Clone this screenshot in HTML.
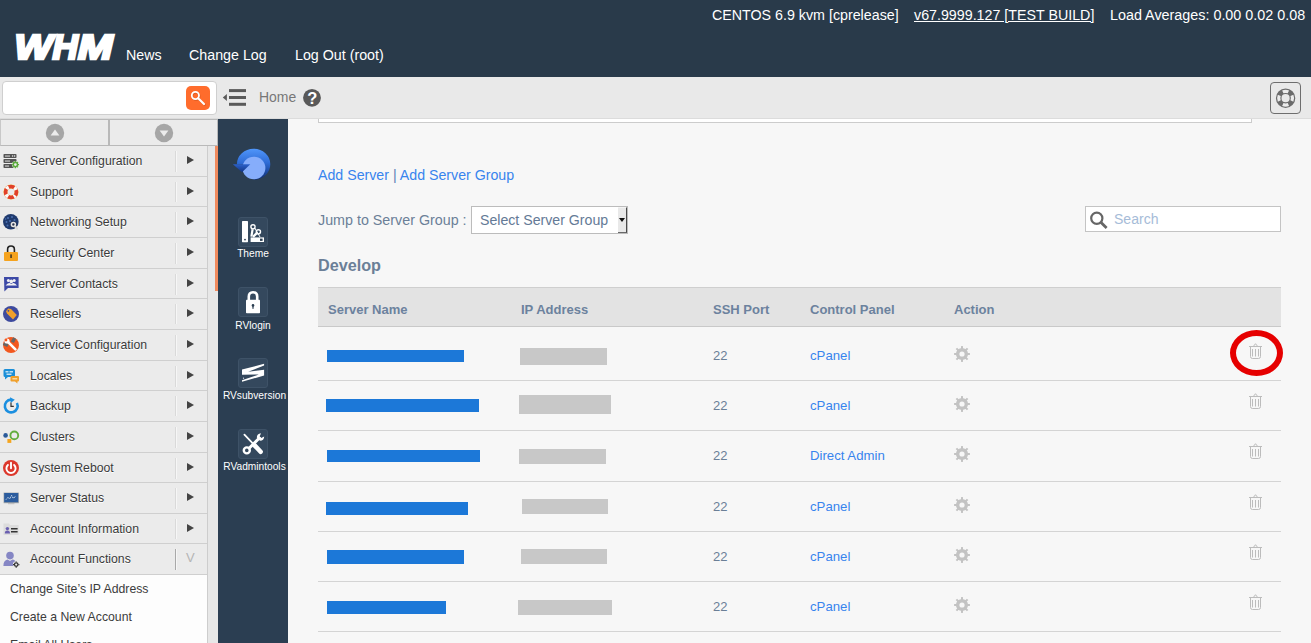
<!DOCTYPE html>
<html lang="en">
<head>
<meta charset="utf-8">
<title>WHM - Server List</title>
<style>
*{box-sizing:border-box;margin:0;padding:0}
html,body{width:1311px;height:643px;overflow:hidden;background:#f7f7f7;font-family:"Liberation Sans",Arial,sans-serif;}
.abs{position:absolute}
#hdr{position:absolute;left:0;top:0;width:1311px;height:77px;background:#293a4a;color:#fff}
#hdr .t{position:absolute;white-space:nowrap;font-size:14.25px;line-height:17px;color:#fff}
#bar{position:absolute;left:0;top:77px;width:1311px;height:42px;background:#e9e9e9;border-bottom:1px solid #dcdcdc}
#side{position:absolute;left:0;top:119px;width:218px;height:524px;background:#ededed}
#dark{position:absolute;left:218px;top:119px;width:70px;height:524px;background:#2b3e52}
#main{position:absolute;left:288px;top:119px;width:1023px;height:524px;background:#f7f7f7;overflow:hidden}
.mi{position:absolute;left:0;width:207px;height:31px;border-bottom:1px solid #cfcfcf;background:#ebebeb;font-size:12.25px;color:#3a3a3a}
.mi span{position:absolute;left:30px;top:7px;line-height:16px;white-space:nowrap;text-shadow:0 1px 0 #fff}
.mi i{position:absolute;left:175px;top:5px;width:1px;height:20px;background:#d9d9d9;border-right:1px solid #f6f6f6;width:2px}
.mi b{position:absolute;left:187px;top:10px;width:0;height:0;border-left:7px solid #444;border-top:4px solid transparent;border-bottom:4px solid transparent}
.mi em{position:absolute;left:186px;top:6px;font-style:normal;font-size:13px;color:#b5b5b5;line-height:16px}
.ic{position:absolute;left:2px;top:6px;width:18px;height:18px;text-decoration:none}
.sub{position:absolute;left:10px;font-size:12.25px;color:#3c3c3c;white-space:nowrap;line-height:16px}
.dl{position:absolute;left:-5px;width:80px;text-align:center;color:#fff;font-size:10.2px;line-height:12px;white-space:nowrap}
.dbox{left:20px;width:30px;height:30px;background:#34485d;border:1px solid #3e5267;border-radius:3px}
.th{position:absolute;top:183px;font-weight:bold;font-size:13px;color:#6c829e;line-height:16px;white-space:nowrap}
.row{position:absolute;left:30px;width:963px;height:1px;background:#d4d4d4}
.c{position:absolute;font-size:13px;line-height:16px;white-space:nowrap}
.blue{color:#3884ee}
.sl{color:#6b7f97}
.bb{position:absolute;background:#1c78d8;height:11px}
.gb{position:absolute;background:#c8c8c8;height:15px}
</style>
</head>
<body>
<div id="hdr">
  <div class="t" style="left:712px;top:7px">CENTOS 6.9 kvm [cprelease]</div>
  <div class="t" style="left:914px;top:7px;text-decoration:underline">v67.9999.127 [TEST BUILD]</div>
  <div class="t" style="left:1110px;top:7px;font-size:14.35px">Load Averages: 0.00 0.02 0.08</div>
  <svg class="abs" style="left:8px;top:26px" width="116" height="42" viewBox="0 0 116 42"><g font-family="Liberation Sans,Arial,sans-serif" font-weight="bold" font-style="italic" font-size="35.4" fill="#fff" stroke="#fff" stroke-width="2.6" stroke-linejoin="miter"><text x="6.6" y="33.1" textLength="38" lengthAdjust="spacingAndGlyphs">W</text><text x="44.6" y="33.1" textLength="25.4" lengthAdjust="spacingAndGlyphs">H</text><text x="70" y="33.1" textLength="34.6" lengthAdjust="spacingAndGlyphs">M</text></g></svg>
  <div class="t" style="left:126px;top:47px">News</div>
  <div class="t" style="left:189px;top:47px">Change Log</div>
  <div class="t" style="left:295px;top:47px">Log Out (root)</div>
</div>
<div id="bar">
  <div class="abs" style="left:2px;top:4px;width:215px;height:34px;background:#fff;border:1px solid #cfcfcf;border-radius:4px"></div>
  <div class="abs" style="left:186px;top:9px;width:24px;height:24px;background:#ff6c2c;border-radius:5px"></div>
  <svg class="abs" style="left:186px;top:9px" width="24" height="24" viewBox="0 0 24 24"><g fill="none" stroke="#b84a1a" stroke-opacity=".55" transform="translate(.6 .8)"><circle cx="9.4" cy="9.5" r="3.6" stroke-width="1.8"/><path d="M12.2 12.3 L18 18" stroke-width="2.2" stroke-linecap="round"/></g><g fill="none" stroke="#fff"><circle cx="9.4" cy="9.5" r="3.6" stroke-width="1.8"/><path d="M12.2 12.3 L18 18" stroke-width="2.2" stroke-linecap="round"/></g></svg>
  <svg class="abs" style="left:220px;top:10px" width="28" height="22" viewBox="0 0 28 22"><g fill="#5a5a5a"><rect x="9" y="2.1" width="17" height="3"/><rect x="9" y="9" width="17" height="3"/><rect x="9" y="15.8" width="17" height="3"/><path d="M2.8 10.5 L6.9 7 V14Z"/></g></svg>
  <div class="abs" style="left:259px;top:10px;font-size:15.5px;line-height:19px;color:#777;transform:scaleX(.9);transform-origin:0 0">Home</div>
  <svg class="abs" style="left:302px;top:11px" width="20" height="20" viewBox="0 0 20 20"><circle cx="10" cy="9.8" r="8.9" fill="#595959"/><text x="10.2" y="15.6" text-anchor="middle" font-family="Liberation Sans,Arial,sans-serif" font-weight="bold" font-size="16.5" fill="#fff">?</text></svg>
  <div class="abs" style="left:1270px;top:5px;width:31px;height:32px;border:1px solid #6e6e6e;border-radius:4px;background:#e9e9e9"></div>
  <svg class="abs" style="left:1273px;top:9px" width="25" height="25" viewBox="0 0 25 25"><circle cx="12.6" cy="12.2" r="6.9" fill="none" stroke="#6b6b6b" stroke-width="5.6"/><path d="M9.79 5.90 A6.90 6.90 0 0 1 15.41 5.90 M18.90 9.39 A6.90 6.90 0 0 1 18.90 15.01 M15.41 18.50 A6.90 6.90 0 0 1 9.79 18.50 M6.30 15.01 A6.90 6.90 0 0 1 6.30 9.39" fill="none" stroke="#ececec" stroke-width="3.2"/></svg>
</div>
<div id="side">
<div class="abs" style="left:0;top:0;width:109px;height:27px;border:1px solid #b9b9b9;border-left-color:#c8c8c8;background:#ebebeb"></div>
<div class="abs" style="left:109px;top:0;width:109px;height:27px;border:1px solid #b9b9b9;background:#ebebeb"></div>
<svg class="abs" style="left:45px;top:4px" width="20" height="20" viewBox="0 0 20 20"><circle cx="10" cy="10" r="9.2" fill="#a6a6a6"/><path d="M5.6 12.6 L10 6.6 L14.4 12.6Z" fill="#ececec"/></svg>
<svg class="abs" style="left:154px;top:4px" width="20" height="20" viewBox="0 0 20 20"><circle cx="10" cy="10" r="9.2" fill="#a6a6a6"/><path d="M5.6 7.6 L10 13.6 L14.4 7.6Z" fill="#ececec"/></svg>
<div class="mi" style="top:27px;height:31px"><svg class="ic" width="18" height="18" viewBox="0 0 18 18"><g fill="#555"><rect x="1.5" y="2" width="13" height="4" rx=".8"/><rect x="1.5" y="7" width="13" height="4" rx=".8"/><rect x="1.5" y="12" width="10" height="4" rx=".8"/></g><g fill="#eee"><rect x="3" y="3.6" width="5" height=".9"/><rect x="3" y="8.6" width="5" height=".9"/><rect x="3" y="13.6" width="4" height=".9"/><circle cx="12.6" cy="4" r=".7"/><circle cx="10.6" cy="4" r=".7"/></g><g transform="translate(-.6 -1) scale(.96)" transform-origin="14 13.6"><circle cx="14" cy="13.6" r="3.6" fill="#ebebeb"/><circle cx="14" cy="13.6" r="2.2" fill="none" stroke="#5cab3c" stroke-width="1.5"/><g stroke="#5cab3c" stroke-width="1.3"><path d="M14 9.8V11M14 16.2V17.4M10.2 13.6H11.4M16.6 13.6H17.8M11.3 10.9l.9.9M15.8 15.4l.9.9M11.3 16.3l.9-.9M15.8 11.8l.9-.9"/></g></g></svg><span style="top:7px">Server Configuration</span><i style="top:5px;height:21px"></i><b style="top:10px"></b></div>
<div class="mi" style="top:58px;height:30px"><svg class="ic" width="18" height="18" viewBox="0 0 18 18"><circle cx="9" cy="9" r="7.6" fill="#f6d25a"/><circle cx="9" cy="9" r="5.4" fill="none" stroke="#e1402a" stroke-width="3.8"/><circle cx="9" cy="9" r="5.4" fill="none" stroke="#fafafa" stroke-width="3.8" stroke-dasharray="3 5.48" stroke-dashoffset="1.5" transform="rotate(45 9 9)"/><circle cx="9" cy="9" r="3.3" fill="#ebebeb"/></svg><span style="top:7px">Support</span><i style="top:5px;height:20px"></i><b style="top:10px"></b></div>
<div class="mi" style="top:88px;height:31px"><svg class="ic" width="18" height="18" viewBox="0 0 18 18"><circle cx="8.8" cy="8.8" r="7.8" fill="#1f3a6e"/><g fill="#4a6fb0"><circle cx="6" cy="5" r="1.1"/><circle cx="10" cy="4" r="1"/><circle cx="12.5" cy="7" r="1"/><circle cx="4.5" cy="9" r="1"/><circle cx="8" cy="8" r="1"/><circle cx="5.5" cy="12.5" r="1"/><circle cx="3.6" cy="6" r=".8"/></g><circle cx="11.6" cy="11.8" r="3.4" fill="#2a3550"/><circle cx="11.4" cy="11.4" r="2" fill="none" stroke="#e6e6e6" stroke-width="1.5"/><path d="M12.8 13 L15 15.6" stroke="#d8d8d8" stroke-width="2.2" stroke-linecap="round"/></svg><span style="top:7px">Networking Setup</span><i style="top:5px;height:21px"></i><b style="top:10px"></b></div>
<div class="mi" style="top:119px;height:31px"><svg class="ic" width="18" height="18" viewBox="0 0 18 18"><path d="M5.6 8.5 V5.4 Q5.6 2 9 2 Q12.4 2 12.4 5.4 V8.5" fill="none" stroke="#222" stroke-width="1.6"/><rect x="2" y="8" width="14" height="9" rx="1" fill="#f5a31f"/><rect x="8.4" y="10.4" width="1.3" height="3.6" fill="#222"/></svg><span style="top:7px">Security Center</span><i style="top:5px;height:21px"></i><b style="top:10px"></b></div>
<div class="mi" style="top:150px;height:30px"><svg class="ic" width="18" height="18" viewBox="0 0 18 18"><path d="M2 2 H16.6 V13 H6 L2.4 16.6 Z" fill="#3c49a6"/><g fill="#f2f2f2"><circle cx="6.4" cy="5.6" r="1.5"/><circle cx="12.2" cy="5.6" r="1.5"/><circle cx="9.3" cy="6.4" r="1.8"/><path d="M3.6 10.6 Q6.4 6.6 9.3 9 Q12.2 6.6 15 10.6 Z"/></g></svg><span style="top:7px">Server Contacts</span><i style="top:5px;height:21px"></i><b style="top:10px"></b></div>
<div class="mi" style="top:180px;height:31px"><svg class="ic" width="18" height="18" viewBox="0 0 18 18"><circle cx="9" cy="9" r="8" fill="#3d4a9e"/><path d="M4 6.2 L6.2 3.6 L9 4 L14.8 10 L11 14.4 L5 8.6 Z" fill="#f0a02c"/><circle cx="6.4" cy="5.8" r=".9" fill="#3d4a9e"/></svg><span style="top:7px">Resellers</span><i style="top:5px;height:20px"></i><b style="top:10px"></b></div>
<div class="mi" style="top:211px;height:31px"><svg class="ic" width="18" height="18" viewBox="0 0 18 18"><circle cx="9" cy="9" r="8" fill="#f2581f"/><path d="M1.6 7.4 L6 9.6 M12.6 2 L10.4 6.2" stroke="#666" stroke-width="3.4"/><path d="M5.4 5.4 L13.4 13.4" stroke="#fff" stroke-width="2.6" stroke-linecap="round"/><circle cx="5" cy="5" r="2.6" fill="#fff"/><circle cx="4" cy="4" r="1.4" fill="#f2581f"/></svg><span style="top:7px">Service Configuration</span><i style="top:5px;height:21px"></i><b style="top:10px"></b></div>
<div class="mi" style="top:242px;height:30px"><svg class="ic" width="18" height="18" viewBox="0 0 18 18"><path d="M1.5 3.5 Q1.5 2 3 2 H11.5 Q13 2 13 3.5 V8.5 Q13 10 11.5 10 H6 L3 12.6 V10 Q1.5 10 1.5 8.500 Z" fill="#1b8fd8"/><path d="M8.5 10 Q8.500 9 9.5 9 H16 Q17 9 17 10 V13.500 Q17 14.5 16 14.500 H15.400 V16.400 L13 14.500 H9.500 Q8.500 14.500 8.500 13.500Z" fill="#f0a02c"/><g fill="#eaf4fb"><rect x="3.5" y="4.200" width="3" height="1.200"/><rect x="7.500" y="4.200" width="3.500" height="1.200"/><rect x="4.500" y="6.600" width="5" height="1.200"/></g><rect x="10.400" y="11.200" width="4.800" height="1.200" fill="#fbe6c0"/></svg><span style="top:7px">Locales</span><i style="top:5px;height:21px"></i><b style="top:10px"></b></div>
<div class="mi" style="top:272px;height:31px"><svg class="ic" width="18" height="18" viewBox="0 0 18 18"><path d="M14.9 6 A6.400 6.400 0 1 1 9 2.600" fill="none" stroke="#1b8fe0" stroke-width="2.600"/><path d="M8 .2 L12.800 2.800 L8.800 6 Z" fill="#1b8fe0"/><path d="M9 5.500 V9.400 H11.800" fill="none" stroke="#333" stroke-width="1.200"/></svg><span style="top:7px">Backup</span><i style="top:5px;height:20px"></i><b style="top:10px"></b></div>
<div class="mi" style="top:303px;height:31px"><svg class="ic" width="18" height="18" viewBox="0 0 18 18"><circle cx="12.300" cy="7.400" r="3.900" fill="none" stroke="#63ad3e" stroke-width="1.900"/><circle cx="3.600" cy="7.400" r="2.300" fill="#2a5a9a"/><rect x="5.400" y="11" width="3.900" height="3.900" fill="#f5a51f"/></svg><span style="top:7px">Clusters</span><i style="top:5px;height:21px"></i><b style="top:10px"></b></div>
<div class="mi" style="top:334px;height:30px"><svg class="ic" width="18" height="18" viewBox="0 0 18 18"><circle cx="9" cy="9" r="8" fill="#dc382c"/><path d="M5.900 6 A4.600 4.600 0 1 0 12.100 6" fill="none" stroke="#fff" stroke-width="1.900" stroke-linecap="round"/><path d="M9 3.600 V9.200" stroke="#fff" stroke-width="1.900" stroke-linecap="round"/></svg><span style="top:7px">System Reboot</span><i style="top:5px;height:21px"></i><b style="top:10px"></b></div>
<div class="mi" style="top:364px;height:31px"><svg class="ic" width="18" height="18" viewBox="0 0 18 18"><rect x="1.600" y="3.600" width="15.200" height="10.600" fill="#9aa0a6"/><rect x="2.200" y="4" width="14" height="9.200" fill="#2b5c9e"/><path d="M4 10.600 L6 8.400 L7.600 10 L9.600 6.400 L11.400 9.400 L13.600 7" fill="none" stroke="#dfe9f5" stroke-width="1" stroke-dasharray="1.400 .8"/><rect x="6" y="14.200" width="6.400" height="1" fill="#b8b8b8"/></svg><span style="top:7px">Server Status</span><i style="top:5px;height:21px"></i><b style="top:10px"></b></div>
<div class="mi" style="top:395px;height:30px"><svg class="ic" width="18" height="18" viewBox="0 0 18 18"><path d="M1.500 3.500 H7 L8 5 H16.600 V15 H1.500 Z" fill="#dcdcdc"/><circle cx="5.400" cy="8.600" r="1.700" fill="#6a5fb0"/><path d="M2.800 13.400 Q2.800 10.600 5.400 10.600 Q8 10.600 8 13.400Z" fill="#6a5fb0"/><rect x="9" y="8" width="6.600" height="1.500" fill="#333"/><rect x="9" y="11" width="6.600" height="1.500" fill="#333"/></svg><span style="top:7px">Account Information</span><i style="top:5px;height:20px"></i><b style="top:10px"></b></div>
<div class="mi" style="top:425px;height:31px"><svg class="ic" width="18" height="18" viewBox="0 0 18 18"><circle cx="8" cy="5.600" r="3.800" fill="#8586c4"/><path d="M1.400 16 Q1.400 10.200 5.600 9.600 L8 11 L10.400 9.600 Q13.400 10 14 13 V16 Z" fill="#8586c4"/><circle cx="14.200" cy="14.600" r="3.300" fill="#ebebeb"/><circle cx="14.200" cy="14.600" r="1.800" fill="none" stroke="#333" stroke-width="1.300"/><path d="M14.200 11.400V12.400M14.200 16.800V17.800M11 14.600H12M16.400 14.600H17.400" stroke="#333" stroke-width="1.200"/></svg><span style="top:7px">Account Functions</span><i style="background:#a9a9a9;top:5px;height:21px"></i><em>V</em></div>
<div class="abs" style="left:0;top:456px;width:207px;height:68px;background:#fdfdfd"></div>
<div class="sub" style="top:462px">Change Site’s IP Address</div>
<div class="sub" style="top:490px">Create a New Account</div>
<div class="sub" style="top:518px">Email All Users</div>
<div class="abs" style="left:207px;top:27px;width:11px;height:497px;background:#e7e7e7;border-left:1px solid #cdcdcd"></div>
<div class="abs" style="left:215px;top:27px;width:3px;height:145px;background:#f08a5d"></div>
</div>
<div id="dark">
<svg class="abs" style="left:14px;top:26px" width="42" height="40" viewBox="0 0 42 40">
<defs><linearGradient id="g1" x1="0" y1="0" x2="0" y2="1"><stop offset="0" stop-color="#5096fa"/><stop offset=".45" stop-color="#2f6cd6"/><stop offset="1" stop-color="#0e2c72"/></linearGradient><linearGradient id="g2" x1="0" y1="0" x2="0" y2="1"><stop offset="0" stop-color="#2c62cc"/><stop offset="1" stop-color="#123484"/></linearGradient></defs>
<path d="M21.6 19.2 L4.900 19.200 A16.700 15.500 0 1 1 21.600 34.700 Z" fill="url(#g1)"/>
<ellipse cx="21.900" cy="23" rx="11.500" ry="11.300" fill="#86adfb"/>
<path d="M.9 19.200 H18.300 L10 27.200 Z" fill="url(#g2)"/>
</svg>
<div class="abs dbox" style="top:98px"></div>
<div class="dl" style="top:129px;left:-5px">Theme</div>
<div class="abs dbox" style="top:168px"></div>
<div class="dl" style="top:201px;left:-5px">RVlogin</div>
<div class="abs dbox" style="top:239px"></div>
<div class="dl" style="top:271px;left:-3.5px">RVsubversion</div>
<div class="abs dbox" style="top:310px"></div>
<div class="dl" style="top:342px;left:-3.5px">RVadmintools</div>
<svg class="abs" style="left:20px;top:98px" width="30" height="30" viewBox="0 0 30 30"><rect x="4" y="4" width="6" height="21.2" rx=".6" fill="#fff"/><circle cx="7" cy="22.6" r=".9" fill="#2b3e52"/><g fill="none" stroke="#fff"><path d="M12.6 22.7 H26" stroke-width="4.6"/><path d="M13.400 19.600 L14.600 12.200" stroke-width="2.200"/><path d="M15 19.800 L18.800 16.200" stroke-width="2.400"/><circle cx="15" cy="9.800" r="2.100" stroke-width="1.400"/><circle cx="20.400" cy="14.800" r="2.100" stroke-width="1.400"/><path d="M16.800 11 L22 20" stroke-width="1"/></g><rect x="22" y="21.600" width="2.600" height="2.300" fill="#2b3e52"/></svg>
<svg class="abs" style="left:20px;top:168px" width="30" height="30" viewBox="0 0 30 30"><path d="M10.800 13.500 V9.600 Q10.800 5.200 15 5.200 Q19.200 5.200 19.200 9.600 V13.500" fill="none" stroke="#fff" stroke-width="2.600"/><rect x="8" y="12.800" width="14" height="13.400" rx=".8" fill="#fff"/><circle cx="15" cy="18.400" r="1.300" fill="#2b3e52"/><rect x="14.400" y="18.600" width="1.200" height="3.200" fill="#2b3e52"/></svg>
<svg class="abs" style="left:20px;top:239px" width="30" height="30" viewBox="0 0 30 30"><path d="M26.1 5.800 L4 11.600 V16.700 L20.800 16.500 L4 22.200 V23.800 L26.100 17.600 V11.700 L10.200 13.700 L26.100 7.500 Z" fill="#fff"/><circle cx="5.500" cy="20.200" r=".6" fill="#e8edf2"/></svg>
<svg class="abs" style="left:20px;top:310px" width="30" height="30" viewBox="0 0 30 30"><g fill="none" stroke="#fff" stroke-linecap="round"><path d="M6.400 5.600 L15 14.600" stroke-width="1.800"/><path d="M16.600 16.400 L22.600 22.800" stroke-width="4.600"/><path d="M11.400 19 L21.400 9" stroke-width="3"/><circle cx="8.800" cy="21.400" r="3" stroke-width="2.400"/></g><path d="M18.800 8.400 Q19 4.600 23 4.200 L21.600 7.400 L23.200 9 L26.200 7.400 Q26 11.600 22 11.800 Z" fill="#fff"/></svg>
</div>

<div id="main">
<div class="abs" style="left:30px;top:-10px;width:934px;height:14px;background:#fff;border:1px solid #ccc"></div>
<div class="c" style="left:30px;top:48px;font-size:14.2px;line-height:17px"><span class="blue">Add Server</span> <span style="color:#5f83b8">|</span> <span class="blue">Add Server Group</span></div>
<div class="c" style="left:30px;top:93px;font-size:14.3px;line-height:17px;color:#6b7f97">Jump to Server Group :</div>
<div class="abs" style="left:183px;top:87px;width:157px;height:28px;background:#fff;border:1px solid #bcbcbc"></div>
<div class="abs" style="left:330px;top:88px;width:9px;height:26px;background:#e9e9e9;border-right:1px solid #4a4a4a;border-bottom:1px solid #6a6a6a;border-top:1px solid #f4f4f4"></div>
<div class="c" style="left:192px;top:93px;font-size:14.15px;line-height:17px;color:#647a96">Select Server Group</div>
<div class="abs" style="left:331px;top:99px;width:0;height:0;border-top:4px solid #111;border-left:3px solid transparent;border-right:3px solid transparent"></div>
<div class="abs" style="left:797px;top:87px;width:196px;height:26px;background:#fff;border:1px solid #c4c4c4"></div>
<div class="c" style="left:826px;top:92px;font-size:14.05px;line-height:17px;color:#a6bcd8">Search</div>
<svg class="abs" style="left:801px;top:91px" width="20" height="22" viewBox="0 0 20 22"><circle cx="7.8" cy="8.3" r="5.6" fill="none" stroke="#666" stroke-width="2.2"/><path d="M11.8 12.3 L17.6 18.1" stroke="#666" stroke-width="2.8" stroke-linecap="butt"/></svg>
<div class="c" style="left:30px;top:137px;font-size:16.2px;line-height:19px;font-weight:bold;color:#6b7f97">Develop</div>
<div class="abs" style="left:30px;top:168px;width:963px;height:40px;background:#e3e3e3;border-top:1px solid #cfcfcf;border-bottom:1px solid #c9c9c9"></div>
<div class="th" style="left:40px">Server Name</div>
<div class="th" style="left:233px">IP Address</div>
<div class="th" style="left:425px">SSH Port</div>
<div class="th" style="left:522px">Control Panel</div>
<div class="th" style="left:666px">Action</div>
<div class="row" style="top:261px"></div>
<div class="row" style="top:311px"></div>
<div class="row" style="top:362px"></div>
<div class="row" style="top:412px"></div>
<div class="row" style="top:462px"></div>
<div class="row" style="top:512px"></div>
<div class="bb" style="left:39px;top:231px;width:137px;height:12px"></div>
<div class="gb" style="left:232px;top:229px;width:87px;height:17px"></div>
<div class="c sl" style="left:425px;top:229px">22</div>
<div class="c blue" style="left:522px;top:229px;font-size:13.2px">cPanel</div>
<svg class="abs gear" style="left:665px;top:226px" width="18" height="18" viewBox="0 0 18 18"><g fill="#c3c3c3"><circle cx="9" cy="9" r="6.1"/><rect x="8" y="1.1" width="2" height="4" transform="rotate(0 9 9)"/><rect x="8" y="1.1" width="2" height="4" transform="rotate(45 9 9)"/><rect x="8" y="1.1" width="2" height="4" transform="rotate(90 9 9)"/><rect x="8" y="1.1" width="2" height="4" transform="rotate(135 9 9)"/><rect x="8" y="1.1" width="2" height="4" transform="rotate(180 9 9)"/><rect x="8" y="1.1" width="2" height="4" transform="rotate(225 9 9)"/><rect x="8" y="1.1" width="2" height="4" transform="rotate(270 9 9)"/><rect x="8" y="1.1" width="2" height="4" transform="rotate(315 9 9)"/><circle cx="9" cy="9" r="2.6" fill="#f7f7f7"/></g></svg>
<svg class="abs" style="left:960px;top:223px" width="16" height="18" viewBox="0 0 16 18"><g fill="none" stroke="#bcbcbc" stroke-width="1"><path d="M1 4.5 H14 M5.5 4.2 L7.5 1.7 L9.5 4.2 M2.5 5 V14.5 Q2.5 16.5 4.5 16.5 H10.5 Q12.5 16.5 12.5 14.5 V5 M4.5 7 V14.5 M7.5 7 V14.5 M10.5 7 V14.5"/></g></svg>
<div class="bb" style="left:38px;top:280px;width:153px;height:13px"></div>
<div class="gb" style="left:231px;top:276px;width:92px;height:19px"></div>
<div class="c sl" style="left:425px;top:279px">22</div>
<div class="c blue" style="left:522px;top:279px;font-size:13.2px">cPanel</div>
<svg class="abs gear" style="left:665px;top:276px" width="18" height="18" viewBox="0 0 18 18"><g fill="#c3c3c3"><circle cx="9" cy="9" r="6.1"/><rect x="8" y="1.1" width="2" height="4" transform="rotate(0 9 9)"/><rect x="8" y="1.1" width="2" height="4" transform="rotate(45 9 9)"/><rect x="8" y="1.1" width="2" height="4" transform="rotate(90 9 9)"/><rect x="8" y="1.1" width="2" height="4" transform="rotate(135 9 9)"/><rect x="8" y="1.1" width="2" height="4" transform="rotate(180 9 9)"/><rect x="8" y="1.1" width="2" height="4" transform="rotate(225 9 9)"/><rect x="8" y="1.1" width="2" height="4" transform="rotate(270 9 9)"/><rect x="8" y="1.1" width="2" height="4" transform="rotate(315 9 9)"/><circle cx="9" cy="9" r="2.6" fill="#f7f7f7"/></g></svg>
<svg class="abs" style="left:960px;top:273px" width="16" height="18" viewBox="0 0 16 18"><g fill="none" stroke="#bcbcbc" stroke-width="1"><path d="M1 4.5 H14 M5.5 4.2 L7.5 1.7 L9.5 4.2 M2.5 5 V14.5 Q2.5 16.5 4.5 16.5 H10.5 Q12.5 16.5 12.5 14.5 V5 M4.5 7 V14.5 M7.5 7 V14.5 M10.5 7 V14.5"/></g></svg>
<div class="bb" style="left:39px;top:331px;width:153px;height:12px"></div>
<div class="gb" style="left:231px;top:330px;width:87px;height:15px"></div>
<div class="c sl" style="left:425px;top:329px">22</div>
<div class="c blue" style="left:522px;top:329px;font-size:13.2px">Direct Admin</div>
<svg class="abs gear" style="left:665px;top:326px" width="18" height="18" viewBox="0 0 18 18"><g fill="#c3c3c3"><circle cx="9" cy="9" r="6.1"/><rect x="8" y="1.1" width="2" height="4" transform="rotate(0 9 9)"/><rect x="8" y="1.1" width="2" height="4" transform="rotate(45 9 9)"/><rect x="8" y="1.1" width="2" height="4" transform="rotate(90 9 9)"/><rect x="8" y="1.1" width="2" height="4" transform="rotate(135 9 9)"/><rect x="8" y="1.1" width="2" height="4" transform="rotate(180 9 9)"/><rect x="8" y="1.1" width="2" height="4" transform="rotate(225 9 9)"/><rect x="8" y="1.1" width="2" height="4" transform="rotate(270 9 9)"/><rect x="8" y="1.1" width="2" height="4" transform="rotate(315 9 9)"/><circle cx="9" cy="9" r="2.6" fill="#f7f7f7"/></g></svg>
<svg class="abs" style="left:960px;top:323px" width="16" height="18" viewBox="0 0 16 18"><g fill="none" stroke="#bcbcbc" stroke-width="1"><path d="M1 4.5 H14 M5.5 4.2 L7.5 1.7 L9.5 4.2 M2.5 5 V14.5 Q2.5 16.5 4.5 16.5 H10.5 Q12.5 16.5 12.5 14.5 V5 M4.5 7 V14.5 M7.5 7 V14.5 M10.5 7 V14.5"/></g></svg>
<div class="bb" style="left:38px;top:383px;width:142px;height:13px"></div>
<div class="gb" style="left:234px;top:380px;width:86px;height:15px"></div>
<div class="c sl" style="left:425px;top:380px">22</div>
<div class="c blue" style="left:522px;top:380px;font-size:13.2px">cPanel</div>
<svg class="abs gear" style="left:665px;top:377px" width="18" height="18" viewBox="0 0 18 18"><g fill="#c3c3c3"><circle cx="9" cy="9" r="6.1"/><rect x="8" y="1.1" width="2" height="4" transform="rotate(0 9 9)"/><rect x="8" y="1.1" width="2" height="4" transform="rotate(45 9 9)"/><rect x="8" y="1.1" width="2" height="4" transform="rotate(90 9 9)"/><rect x="8" y="1.1" width="2" height="4" transform="rotate(135 9 9)"/><rect x="8" y="1.1" width="2" height="4" transform="rotate(180 9 9)"/><rect x="8" y="1.1" width="2" height="4" transform="rotate(225 9 9)"/><rect x="8" y="1.1" width="2" height="4" transform="rotate(270 9 9)"/><rect x="8" y="1.1" width="2" height="4" transform="rotate(315 9 9)"/><circle cx="9" cy="9" r="2.6" fill="#f7f7f7"/></g></svg>
<svg class="abs" style="left:960px;top:374px" width="16" height="18" viewBox="0 0 16 18"><g fill="none" stroke="#bcbcbc" stroke-width="1"><path d="M1 4.5 H14 M5.5 4.2 L7.5 1.7 L9.5 4.2 M2.5 5 V14.5 Q2.5 16.5 4.5 16.5 H10.5 Q12.5 16.5 12.5 14.5 V5 M4.5 7 V14.5 M7.5 7 V14.5 M10.5 7 V14.5"/></g></svg>
<div class="bb" style="left:39px;top:431px;width:137px;height:14px"></div>
<div class="gb" style="left:233px;top:430px;width:86px;height:15px"></div>
<div class="c sl" style="left:425px;top:430px">22</div>
<div class="c blue" style="left:522px;top:430px;font-size:13.2px">cPanel</div>
<svg class="abs gear" style="left:665px;top:427px" width="18" height="18" viewBox="0 0 18 18"><g fill="#c3c3c3"><circle cx="9" cy="9" r="6.1"/><rect x="8" y="1.1" width="2" height="4" transform="rotate(0 9 9)"/><rect x="8" y="1.1" width="2" height="4" transform="rotate(45 9 9)"/><rect x="8" y="1.1" width="2" height="4" transform="rotate(90 9 9)"/><rect x="8" y="1.1" width="2" height="4" transform="rotate(135 9 9)"/><rect x="8" y="1.1" width="2" height="4" transform="rotate(180 9 9)"/><rect x="8" y="1.1" width="2" height="4" transform="rotate(225 9 9)"/><rect x="8" y="1.1" width="2" height="4" transform="rotate(270 9 9)"/><rect x="8" y="1.1" width="2" height="4" transform="rotate(315 9 9)"/><circle cx="9" cy="9" r="2.6" fill="#f7f7f7"/></g></svg>
<svg class="abs" style="left:960px;top:424px" width="16" height="18" viewBox="0 0 16 18"><g fill="none" stroke="#bcbcbc" stroke-width="1"><path d="M1 4.5 H14 M5.5 4.2 L7.5 1.7 L9.5 4.2 M2.5 5 V14.5 Q2.5 16.5 4.5 16.5 H10.5 Q12.5 16.5 12.5 14.5 V5 M4.5 7 V14.5 M7.5 7 V14.5 M10.5 7 V14.5"/></g></svg>
<div class="bb" style="left:39px;top:482px;width:119px;height:13px"></div>
<div class="gb" style="left:230px;top:481px;width:94px;height:15px"></div>
<div class="c sl" style="left:425px;top:480px">22</div>
<div class="c blue" style="left:522px;top:480px;font-size:13.2px">cPanel</div>
<svg class="abs gear" style="left:665px;top:477px" width="18" height="18" viewBox="0 0 18 18"><g fill="#c3c3c3"><circle cx="9" cy="9" r="6.1"/><rect x="8" y="1.1" width="2" height="4" transform="rotate(0 9 9)"/><rect x="8" y="1.1" width="2" height="4" transform="rotate(45 9 9)"/><rect x="8" y="1.1" width="2" height="4" transform="rotate(90 9 9)"/><rect x="8" y="1.1" width="2" height="4" transform="rotate(135 9 9)"/><rect x="8" y="1.1" width="2" height="4" transform="rotate(180 9 9)"/><rect x="8" y="1.1" width="2" height="4" transform="rotate(225 9 9)"/><rect x="8" y="1.1" width="2" height="4" transform="rotate(270 9 9)"/><rect x="8" y="1.1" width="2" height="4" transform="rotate(315 9 9)"/><circle cx="9" cy="9" r="2.6" fill="#f7f7f7"/></g></svg>
<svg class="abs" style="left:960px;top:474px" width="16" height="18" viewBox="0 0 16 18"><g fill="none" stroke="#bcbcbc" stroke-width="1"><path d="M1 4.5 H14 M5.5 4.2 L7.5 1.7 L9.5 4.2 M2.5 5 V14.5 Q2.5 16.5 4.5 16.5 H10.5 Q12.5 16.5 12.5 14.5 V5 M4.5 7 V14.5 M7.5 7 V14.5 M10.5 7 V14.5"/></g></svg>
<div class="abs" style="left:942px;top:211px;width:53px;height:46px;border:6.5px solid #e60000;border-radius:50%"></div>
</div>
</body>
</html>
